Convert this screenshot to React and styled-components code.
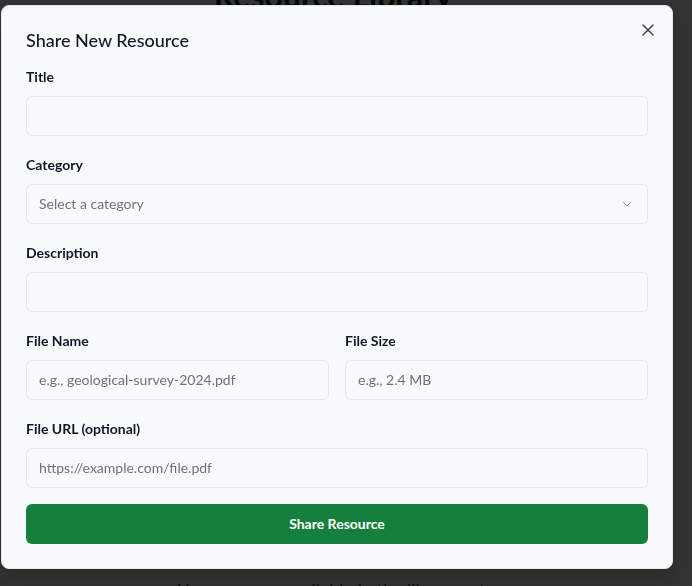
import React from "react";
import styled, { createGlobalStyle } from "styled-components";
import { X, ChevronDown } from "lucide-react";

const GlobalStyle = createGlobalStyle`
  html, body {
    margin: 0;
    padding: 0;
    background: #ffffff;
    font-family: Lato, "Noto Sans", sans-serif;
    overflow: hidden;
  }
  * { box-sizing: border-box; }
`;

const Page = styled.div`
  height: 586px;
  padding-right: 26px;
  display: flex;
  flex-direction: column;
  align-items: center;
  overflow: hidden;
`;

const PageHeading = styled.h1`
  margin: -22px 0 0;
  font-size: 32px;
  line-height: 36px;
  font-weight: 700;
  color: #0d2a1c;
`;

const PageList = styled.div`
  width: 100%;
  margin-top: 95px;
  display: flex;
  flex-direction: column;
`;

const PageRow = styled.div`
  height: ${p => p.h}px;
  border-top: 1px solid #e5e7eb;
`;

const EmptyText = styled.p`
  margin: auto 0 -15px;
  font-size: 18px;
  line-height: 22px;
  color: #4b5563;
`;

const Overlay = styled.div`
  position: fixed;
  inset: 0;
  background: rgba(0, 0, 0, 0.8);
`;

const Dialog = styled.div`
  position: fixed;
  left: 1px;
  top: 5px;
  width: 672px;
  background: #f8fafc;
  border: 1px solid #e2e8f0;
  border-radius: 8px;
  padding: 24px;
  display: flex;
  flex-direction: column;
  box-shadow: 0 10px 25px rgba(0, 0, 0, 0.2);
`;

const DialogTitle = styled.h2`
  margin: 0 0 18px;
  font-size: 18px;
  line-height: 20px;
  font-weight: 500;
  color: #0f172a;
`;

const CloseButton = styled.button`
  position: absolute;
  top: 14px;
  right: 14px;
  width: 20px;
  height: 20px;
  padding: 0;
  border: none;
  background: none;
  color: #3f3f46;
  display: flex;
  align-items: center;
  justify-content: center;
  cursor: pointer;
`;

const Form = styled.form`
  display: flex;
  flex-direction: column;
  gap: 20px;
`;

const Row = styled.div`
  display: grid;
  grid-template-columns: 1fr 1fr;
  gap: 16px;
`;

const Field = styled.div`
  display: flex;
  flex-direction: column;
  gap: 10px;
`;

const Label = styled.label`
  font-size: 14px;
  line-height: 18px;
  font-weight: 700;
  color: #0f172a;
`;

const Input = styled.input`
  height: 40px;
  width: 100%;
  padding: 0 12px 1px;
  border: 1px solid #e2e8f0;
  border-radius: 6px;
  background: #f8fafc;
  font-family: inherit;
  font-size: 14px;
  color: #0f172a;
  outline: none;
  &::placeholder { color: #71717a; }
`;

const Select = styled.button`
  height: 40px;
  width: 100%;
  padding: 0 12px 1px;
  border: 1px solid #e2e8f0;
  border-radius: 6px;
  background: #f8fafc;
  font-family: inherit;
  font-size: 14px;
  color: #71717a;
  display: flex;
  align-items: center;
  justify-content: space-between;
  text-align: left;
  svg { color: #a1a1aa; }
`;

const SubmitButton = styled.button`
  margin-top: 16px;
  height: 40px;
  width: 100%;
  padding: 0 0 2px;
  border: none;
  border-radius: 6px;
  background: #15803d;
  color: #ffffff;
  font-family: inherit;
  font-size: 14px;
  font-weight: 700;
  cursor: pointer;
`;

export default function App() {
  return (
    <>
      <GlobalStyle />
      <Page>
        <PageHeading>Resource Library</PageHeading>
        <PageList>
          <PageRow h={53} />
          <PageRow h={39} />
          <PageRow h={25} />
          <PageRow h={105} />
          <PageRow h={1} />
        </PageList>
        <EmptyText>No resources available in the library yet.</EmptyText>
      </Page>
      <Overlay />
      <Dialog>
        <DialogTitle>Share New Resource</DialogTitle>
        <CloseButton aria-label="Close">
          <X size={20} strokeWidth={1.75} />
        </CloseButton>
        <Form onSubmit={e => e.preventDefault()}>
          <Field>
            <Label>Title</Label>
            <Input />
          </Field>
          <Field>
            <Label>Category</Label>
            <Select type="button">
              Select a category
              <ChevronDown size={16} strokeWidth={1.5} />
            </Select>
          </Field>
          <Field>
            <Label>Description</Label>
            <Input />
          </Field>
          <Row>
            <Field>
              <Label>File Name</Label>
              <Input placeholder="e.g., geological-survey-2024.pdf" />
            </Field>
            <Field>
              <Label>File Size</Label>
              <Input placeholder="e.g., 2.4 MB" />
            </Field>
          </Row>
          <Field>
            <Label>File URL (optional)</Label>
            <Input placeholder="https://example.com/file.pdf" />
          </Field>
        </Form>
        <SubmitButton type="button">Share Resource</SubmitButton>
      </Dialog>
    </>
  );
}
